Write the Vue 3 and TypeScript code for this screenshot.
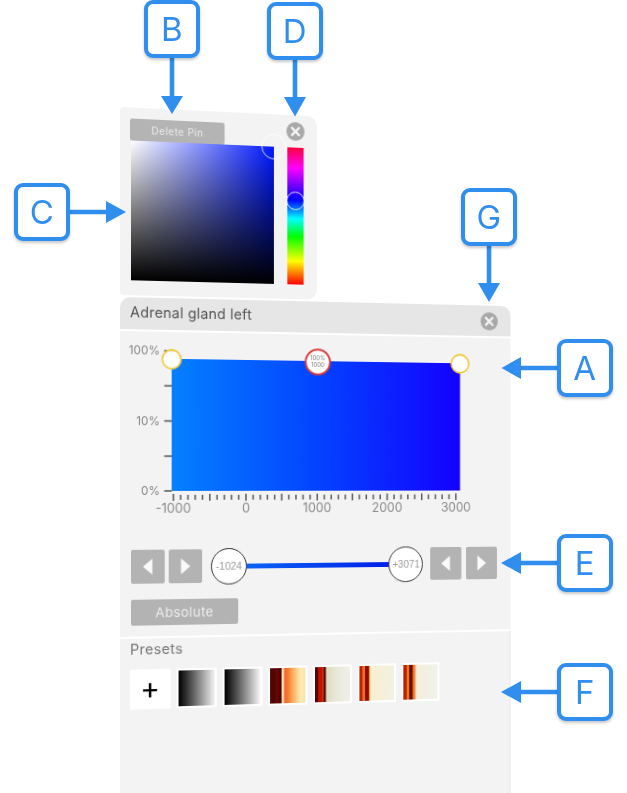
<script setup lang="ts">
const xTicks = Array.from({ length: 41 }, (_, i) => ({ x: 53.7 + 7.43 * i, major: i % 5 === 0 }))
const xLabels = [
  { t: '-1000', x: 53.7 },
  { t: '0', x: 128 },
  { t: '1000', x: 202.3 },
  { t: '2000', x: 276.6 },
  { t: '3000', x: 351 },
]
const yTicks = [10, 45.3, 80.6, 116, 151]
const yLabels = [
  { t: '100%', y: 10 },
  { t: '10%', y: 80.6 },
  { t: '0%', y: 151 },
]
const tiles = ['t1', 't2', 't3', 't4', 't5', 't6']
const callouts = ['A', 'B', 'C', 'D', 'E', 'F', 'G']
const arrows = [
  'M172 58V97',
  'M295 60V98',
  'M69 212H107',
  'M489 246V284',
  'M557 368H520',
  'M558 563H520',
  'M558 692H520',
]
const heads = [
  '161,96 183,96 172,114',
  '284,97 306,97 295,116.5',
  '106,201 106,223 126,212',
  '478,283 500,283 489,302',
  '521,357 521,379 501.5,368',
  '521,552 521,574 501,563',
  '521,681 521,703 501,692',
]
</script>

<template>
  <div class="canvas">
    <div class="stage">
      <section class="popover">
        <div class="pop-top">
          <button class="delete">Delete Pin</button>
          <span class="close pop-close">
            <svg viewBox="0 0 18 18"><path d="M5.6 5.6l6.8 6.8M12.4 5.6l-6.8 6.8" /></svg>
          </span>
        </div>
        <div class="pop-body">
          <div class="square"><span class="sq-thumb"></span></div>
          <div class="hue"><span class="hue-thumb"></span></div>
        </div>
      </section>

      <section class="panel">
        <header class="head">
          <span class="title">Adrenal gland left</span>
          <span class="close">
            <svg viewBox="0 0 18 18"><path d="M5.6 5.6l6.8 6.8M12.4 5.6l-6.8 6.8" /></svg>
          </span>
        </header>

        <div class="editor">
          <svg class="chart" viewBox="0 0 410 180" width="410" height="180">
            <defs>
              <linearGradient id="tf" x1="0" x2="1" y1="0" y2="0">
                <stop offset="0" stop-color="#0580ff" />
                <stop offset="0.5" stop-color="#0342ff" />
                <stop offset="1" stop-color="#1400ff" />
              </linearGradient>
            </defs>
            <rect x="52" y="18" width="303.5" height="133" fill="url(#tf)" />
            <line v-for="y in yTicks" :key="y" x1="44.5" x2="52" :y1="y" :y2="y" class="tick" />
            <line
              v-for="t in xTicks"
              :key="t.x"
              :x1="t.x"
              :x2="t.x"
              :y1="t.major ? 154 : 155"
              :y2="t.major ? 161 : 160"
              class="tick"
            />
            <text v-for="l in yLabels" :key="l.t" x="40" :y="l.y + 4.2" text-anchor="end" class="axis y-axis">{{ l.t }}</text>
            <text v-for="l in xLabels" :key="l.t" :x="l.x" y="173" text-anchor="middle" class="axis">{{ l.t }}</text>
            <circle cx="52" cy="18.5" r="9.5" class="pin" />
            <circle cx="355.5" cy="18.5" r="9.5" class="pin" />
            <circle cx="203" cy="19" r="12.8" class="pin red" />
            <text x="203" y="17" text-anchor="middle" class="pin-text">100%</text>
            <text x="203" y="24.5" text-anchor="middle" class="pin-text">1000</text>
          </svg>

          <div class="range">
            <button class="step"><svg viewBox="0 0 10 16"><polygon points="9.5,0 9.5,16 0,8" /></svg></button>
            <button class="step"><svg viewBox="0 0 10 16"><polygon points="0.5,0 0.5,16 10,8" /></svg></button>
            <div class="slider">
              <span class="knob">-1024</span>
              <span class="track"></span>
              <span class="knob">+3071</span>
            </div>
            <button class="step"><svg viewBox="0 0 10 16"><polygon points="9.5,0 9.5,16 0,8" /></svg></button>
            <button class="step"><svg viewBox="0 0 10 16"><polygon points="0.5,0 0.5,16 10,8" /></svg></button>
          </div>

          <button class="absolute-btn">Absolute</button>
        </div>

        <div class="presets">
          <div class="presets-title">Presets</div>
          <div class="tiles">
            <div class="add">+</div>
            <div v-for="t in tiles" :key="t" class="tile" :class="t"></div>
          </div>
        </div>
      </section>
    </div>

    <svg class="arrows" viewBox="0 0 627 793" width="627" height="793">
      <path v-for="a in arrows" :key="a" :d="a" class="shaft" />
      <polygon v-for="h in heads" :key="h" :points="h" class="arrow-head" />
    </svg>
    <div v-for="c in callouts" :key="c" class="callout" :class="'c' + c">{{ c }}</div>
  </div>
</template>

<style>
html,
body {
  margin: 0;
  background: #fff;
}
</style>

<style scoped>
.canvas {
  position: relative;
  width: 627px;
  height: 793px;
  overflow: hidden;
  background: #fff;
  font-family: Inter, "Liberation Sans", sans-serif;
}
.stage {
  position: absolute;
  left: 120px;
  top: 0;
  width: 411px;
  padding-top: 107px;
  transform-origin: 0 480px;
  transform: matrix3d(1, 0, 0, 0.000128, 0, 1, 0, 0, 0, 0, 1, 0, 0, 0, 0, 1);
  filter: blur(0.3px);
}
button {
  border: 0;
  padding: 0;
  font-family: inherit;
}
.popover {
  box-sizing: border-box;
  width: 202px;
  height: 188px;
  margin-bottom: 2px;
  padding: 11px 14px 0 11px;
  background: #f3f3f3;
  border-radius: 4px 10px 10px 4px;
}
.pop-top {
  display: flex;
  align-items: flex-start;
  height: 22px;
}
.delete {
  width: 96px;
  height: 22px;
  margin-left: -1px;
  background: #b4b4b4;
  border-radius: 2px;
  color: #ececec;
  font-size: 10px;
  letter-spacing: 0.5px;
}
.close {
  display: block;
  width: 19px;
  height: 19px;
  border-radius: 50%;
  background: #a9a9a9;
}
.close svg {
  display: block;
  width: 19px;
  height: 19px;
  fill: none;
  stroke: #f2f2f2;
  stroke-width: 2.4;
  stroke-linecap: round;
}
.pop-close {
  margin: -4px -1px 0 auto;
}
.pop-body {
  display: flex;
  gap: 14px;
}
.square {
  position: relative;
  width: 146px;
  height: 140px;
  background: linear-gradient(to top, #000, rgba(0, 0, 0, 0)), linear-gradient(to right, #fff, #0018ff);
}
.sq-thumb {
  position: absolute;
  right: -13px;
  top: -13px;
  width: 24px;
  height: 24px;
  border: 1px solid rgba(255, 255, 255, 0.8);
  border-radius: 50%;
}
.hue {
  position: relative;
  width: 17px;
  height: 140px;
  background: linear-gradient(
    to bottom,
    #ff0040 0%,
    #ff00ff 15%,
    #0000ff 38%,
    #00ffff 52%,
    #00ff00 65%,
    #ffff00 83%,
    #ff0000 100%
  );
}
.hue-thumb {
  position: absolute;
  left: -1px;
  top: 45px;
  width: 17px;
  height: 17px;
  border: 1px solid rgba(255, 255, 255, 0.85);
  border-radius: 50%;
}
.panel {
  width: 411px;
  height: 540px;
  background: #fff;
}
.head {
  box-sizing: border-box;
  display: flex;
  align-items: center;
  justify-content: space-between;
  height: 32px;
  padding: 0 14px 0 10px;
  background: #e6e6e6;
  border-radius: 10px 10px 0 0;
}
.title {
  margin-top: -3px;
  color: #555;
  font-size: 14.5px;
  letter-spacing: 0.2px;
}
.editor {
  box-sizing: border-box;
  height: 306px;
  margin-top: 2px;
  padding-top: 9px;
  background: #f3f3f3;
}
.chart {
  display: block;
}
.tick {
  stroke: #555;
  stroke-width: 1.5;
}
.axis {
  fill: #888;
  font-size: 13px;
}
.y-axis {
  font-size: 11.8px;
}
.pin {
  fill: #fff;
  stroke: #f3cb44;
  stroke-width: 1.8;
}
.pin.red {
  stroke: #d83a3a;
  stroke-width: 2;
}
.pin-text {
  fill: #777;
  font-size: 6px;
}
.range {
  display: flex;
  align-items: center;
  height: 34px;
  margin-top: 30px;
  padding-left: 10.7px;
}
.step {
  display: flex;
  align-items: center;
  justify-content: center;
  width: 34px;
  height: 34px;
  margin-right: 4.5px;
  background: #b3b3b3;
  border-radius: 2px;
}
.step svg {
  width: 10px;
  height: 16px;
  fill: #fafafa;
}
.slider {
  display: flex;
  align-items: center;
  width: 223.5px;
  margin: 0 8px 0 4.3px;
}
.track {
  flex: 1;
  height: 5px;
  background: linear-gradient(to right, #0a62f5, #0020e8);
}
.knob {
  box-sizing: border-box;
  display: flex;
  align-items: center;
  justify-content: center;
  width: 37px;
  height: 37px;
  border: 1.5px solid #333;
  border-radius: 50%;
  background: #fff;
  color: #999;
  font-family: "Liberation Sans", sans-serif;
  font-size: 10.5px;
}
.absolute-btn {
  display: block;
  width: 109px;
  height: 25.5px;
  margin: 16px 0 0 10.7px;
  background: #b3b3b3;
  border-radius: 2px;
  color: #ececec;
  font-size: 13.5px;
  letter-spacing: 0.4px;
}
.presets {
  height: 200px;
  margin-top: 2px;
  padding-top: 3px;
  background: #f3f3f3;
  border-right: 1px solid #e2e2e2;
}
.presets-title {
  height: 16px;
  padding-left: 10px;
  color: #777;
  font-size: 14.5px;
  line-height: 16px;
  letter-spacing: 0.3px;
}
.tiles {
  display: flex;
  gap: 5.5px;
  margin-top: 11.5px;
  padding-left: 9.5px;
}
.add {
  width: 41.5px;
  height: 40px;
  background: #fff;
  color: #000;
  font-size: 30px;
  line-height: 38px;
  text-align: center;
}
.tile {
  box-sizing: border-box;
  width: 41.5px;
  height: 40px;
  border: 2px solid #fff;
}
.t1 {
  background: linear-gradient(to right, #000 0%, #1a1a1a 12%, #f4f4f4 100%);
}
.t2 {
  background: linear-gradient(to right, #000 0%, #222 15%, #f8f8f8 100%);
}
.t3 {
  background: linear-gradient(
    to right,
    #5a0808 0%,
    #4a0505 10%,
    #6e0606 20%,
    #3a0202 31%,
    #ffdcb8 33%,
    #ffdcb8 38%,
    #f26522 41%,
    #f47a30 50%,
    #ffb060 65%,
    #f7d890 78%,
    #f9ecc0 88%,
    #f5e8a0 95%,
    #f2e8c8 100%
  );
}
.t4 {
  background: linear-gradient(
    to right,
    #4e0808 0%,
    #4e0808 8%,
    #c81000 10%,
    #c81000 20%,
    #f06a1e 22%,
    #5a0a00 25%,
    #5a0a00 29%,
    #dcdcc0 33%,
    #e8e8d8 60%,
    #f0f0ec 100%
  );
}
.t5 {
  background: linear-gradient(
    to right,
    #c02000 0%,
    #c02000 8%,
    #f07020 10%,
    #f07020 15%,
    #8a0c00 17%,
    #8a0c00 26%,
    #f08030 28%,
    #f6efd0 32%,
    #f3f1e2 100%
  );
}
.t6 {
  background: linear-gradient(
    to right,
    #c02000 0%,
    #c02000 9%,
    #f07a20 11%,
    #f07a20 16%,
    #6a1000 18%,
    #6a1000 26%,
    #f0702a 28%,
    #f0702a 32%,
    #f3eedc 38%,
    #f2f2ea 100%
  );
}
.arrows {
  position: absolute;
  left: 0;
  top: 0;
}
.shaft {
  fill: none;
  stroke: #2f8eee;
  stroke-width: 4.6;
}
.arrow-head {
  fill: #2f8eee;
}
.callout {
  position: absolute;
  box-sizing: border-box;
  display: flex;
  align-items: center;
  justify-content: center;
  width: 55.5px;
  height: 57.5px;
  border: 4px solid #2f8eee;
  border-radius: 9px;
  background: #fff;
  box-shadow: 0 2px 3px rgba(0, 0, 0, 0.22);
  color: #2f8eee;
  font-size: 33px;
}
.cA { left: 557px; top: 339px; }
.cB { left: 144px; top: 0; }
.cC { left: 14px; top: 183px; }
.cD { left: 267px; top: 2px; }
.cE { left: 557px; top: 534px; }
.cF { left: 557px; top: 663px; }
.cG { left: 461px; top: 188px; }
</style>
